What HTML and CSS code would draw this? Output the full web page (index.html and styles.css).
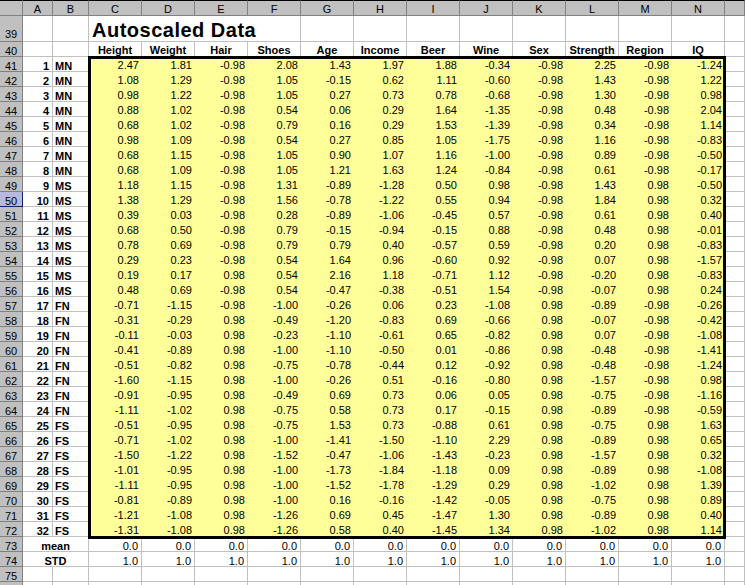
FILE: index.html
```html
<!DOCTYPE html>
<html>
<head>
<meta charset="utf-8">
<title>Autoscaled Data</title>
<link rel="stylesheet" href="styles.css">
</head>
<body>
<div class="sheet">
<div class="ch"></div><div class="ch">A</div><div class="ch">B</div><div class="ch">C</div><div class="ch">D</div><div class="ch">E</div><div class="ch">F</div><div class="ch">G</div><div class="ch">H</div><div class="ch">I</div><div class="ch">J</div><div class="ch">K</div><div class="ch">L</div><div class="ch">M</div><div class="ch">N</div><div class="ch"></div>

<div class="rh r39">39</div><div></div><div></div><div class="title">Autoscaled Data</div><div></div><div></div><div></div><div></div><div></div><div></div><div></div><div></div><div></div>

<div class="rh">40</div><div></div><div></div><div class="hd">Height</div><div class="hd">Weight</div><div class="hd">Hair</div><div class="hd">Shoes</div><div class="hd">Age</div><div class="hd">Income</div><div class="hd">Beer</div><div class="hd">Wine</div><div class="hd">Sex</div><div class="hd">Strength</div><div class="hd">Region</div><div class="hd">IQ</div><div></div>

<div class="rh">41</div><div class="n">1</div><div class="g">MN</div>
<div class="data">
<span>2.47</span><span>1.81</span><span>-0.98</span><span>2.08</span><span>1.43</span><span>1.97</span><span>1.88</span><span>-0.34</span><span>-0.98</span><span>2.25</span><span>-0.98</span><span>-1.24</span>
<span>1.08</span><span>1.29</span><span>-0.98</span><span>1.05</span><span>-0.15</span><span>0.62</span><span>1.11</span><span>-0.60</span><span>-0.98</span><span>1.43</span><span>-0.98</span><span>1.22</span>
<span>0.98</span><span>1.22</span><span>-0.98</span><span>1.05</span><span>0.27</span><span>0.73</span><span>0.78</span><span>-0.68</span><span>-0.98</span><span>1.30</span><span>-0.98</span><span>0.98</span>
<span>0.88</span><span>1.02</span><span>-0.98</span><span>0.54</span><span>0.06</span><span>0.29</span><span>1.64</span><span>-1.35</span><span>-0.98</span><span>0.48</span><span>-0.98</span><span>2.04</span>
<span>0.68</span><span>1.02</span><span>-0.98</span><span>0.79</span><span>0.16</span><span>0.29</span><span>1.53</span><span>-1.39</span><span>-0.98</span><span>0.34</span><span>-0.98</span><span>1.14</span>
<span>0.98</span><span>1.09</span><span>-0.98</span><span>0.54</span><span>0.27</span><span>0.85</span><span>1.05</span><span>-1.75</span><span>-0.98</span><span>1.16</span><span>-0.98</span><span>-0.83</span>
<span>0.68</span><span>1.15</span><span>-0.98</span><span>1.05</span><span>0.90</span><span>1.07</span><span>1.16</span><span>-1.00</span><span>-0.98</span><span>0.89</span><span>-0.98</span><span>-0.50</span>
<span>0.68</span><span>1.09</span><span>-0.98</span><span>1.05</span><span>1.21</span><span>1.63</span><span>1.24</span><span>-0.84</span><span>-0.98</span><span>0.61</span><span>-0.98</span><span>-0.17</span>
<span>1.18</span><span>1.15</span><span>-0.98</span><span>1.31</span><span>-0.89</span><span>-1.28</span><span>0.50</span><span>0.98</span><span>-0.98</span><span>1.43</span><span>0.98</span><span>-0.50</span>
<span>1.38</span><span>1.29</span><span>-0.98</span><span>1.56</span><span>-0.78</span><span>-1.22</span><span>0.55</span><span>0.94</span><span>-0.98</span><span>1.84</span><span>0.98</span><span>0.32</span>
<span>0.39</span><span>0.03</span><span>-0.98</span><span>0.28</span><span>-0.89</span><span>-1.06</span><span>-0.45</span><span>0.57</span><span>-0.98</span><span>0.61</span><span>0.98</span><span>0.40</span>
<span>0.68</span><span>0.50</span><span>-0.98</span><span>0.79</span><span>-0.15</span><span>-0.94</span><span>-0.15</span><span>0.88</span><span>-0.98</span><span>0.48</span><span>0.98</span><span>-0.01</span>
<span>0.78</span><span>0.69</span><span>-0.98</span><span>0.79</span><span>0.79</span><span>0.40</span><span>-0.57</span><span>0.59</span><span>-0.98</span><span>0.20</span><span>0.98</span><span>-0.83</span>
<span>0.29</span><span>0.23</span><span>-0.98</span><span>0.54</span><span>1.64</span><span>0.96</span><span>-0.60</span><span>0.92</span><span>-0.98</span><span>0.07</span><span>0.98</span><span>-1.57</span>
<span>0.19</span><span>0.17</span><span>0.98</span><span>0.54</span><span>2.16</span><span>1.18</span><span>-0.71</span><span>1.12</span><span>-0.98</span><span>-0.20</span><span>0.98</span><span>-0.83</span>
<span>0.48</span><span>0.69</span><span>-0.98</span><span>0.54</span><span>-0.47</span><span>-0.38</span><span>-0.51</span><span>1.54</span><span>-0.98</span><span>-0.07</span><span>0.98</span><span>0.24</span>
<span>-0.71</span><span>-1.15</span><span>-0.98</span><span>-1.00</span><span>-0.26</span><span>0.06</span><span>0.23</span><span>-1.08</span><span>0.98</span><span>-0.89</span><span>-0.98</span><span>-0.26</span>
<span>-0.31</span><span>-0.29</span><span>0.98</span><span>-0.49</span><span>-1.20</span><span>-0.83</span><span>0.69</span><span>-0.66</span><span>0.98</span><span>-0.07</span><span>-0.98</span><span>-0.42</span>
<span>-0.11</span><span>-0.03</span><span>0.98</span><span>-0.23</span><span>-1.10</span><span>-0.61</span><span>0.65</span><span>-0.82</span><span>0.98</span><span>0.07</span><span>-0.98</span><span>-1.08</span>
<span>-0.41</span><span>-0.89</span><span>0.98</span><span>-1.00</span><span>-1.10</span><span>-0.50</span><span>0.01</span><span>-0.86</span><span>0.98</span><span>-0.48</span><span>-0.98</span><span>-1.41</span>
<span>-0.51</span><span>-0.82</span><span>0.98</span><span>-0.75</span><span>-0.78</span><span>-0.44</span><span>0.12</span><span>-0.92</span><span>0.98</span><span>-0.48</span><span>-0.98</span><span>-1.24</span>
<span>-1.60</span><span>-1.15</span><span>0.98</span><span>-1.00</span><span>-0.26</span><span>0.51</span><span>-0.16</span><span>-0.80</span><span>0.98</span><span>-1.57</span><span>-0.98</span><span>0.98</span>
<span>-0.91</span><span>-0.95</span><span>0.98</span><span>-0.49</span><span>0.69</span><span>0.73</span><span>0.06</span><span>0.05</span><span>0.98</span><span>-0.75</span><span>-0.98</span><span>-1.16</span>
<span>-1.11</span><span>-1.02</span><span>0.98</span><span>-0.75</span><span>0.58</span><span>0.73</span><span>0.17</span><span>-0.15</span><span>0.98</span><span>-0.89</span><span>-0.98</span><span>-0.59</span>
<span>-0.51</span><span>-0.95</span><span>0.98</span><span>-0.75</span><span>1.53</span><span>0.73</span><span>-0.88</span><span>0.61</span><span>0.98</span><span>-0.75</span><span>0.98</span><span>1.63</span>
<span>-0.71</span><span>-1.02</span><span>0.98</span><span>-1.00</span><span>-1.41</span><span>-1.50</span><span>-1.10</span><span>2.29</span><span>0.98</span><span>-0.89</span><span>0.98</span><span>0.65</span>
<span>-1.50</span><span>-1.22</span><span>0.98</span><span>-1.52</span><span>-0.47</span><span>-1.06</span><span>-1.43</span><span>-0.23</span><span>0.98</span><span>-1.57</span><span>0.98</span><span>0.32</span>
<span>-1.01</span><span>-0.95</span><span>0.98</span><span>-1.00</span><span>-1.73</span><span>-1.84</span><span>-1.18</span><span>0.09</span><span>0.98</span><span>-0.89</span><span>0.98</span><span>-1.08</span>
<span>-1.11</span><span>-0.95</span><span>0.98</span><span>-1.00</span><span>-1.52</span><span>-1.78</span><span>-1.29</span><span>0.29</span><span>0.98</span><span>-1.02</span><span>0.98</span><span>1.39</span>
<span>-0.81</span><span>-0.89</span><span>0.98</span><span>-1.00</span><span>0.16</span><span>-0.16</span><span>-1.42</span><span>-0.05</span><span>0.98</span><span>-0.75</span><span>0.98</span><span>0.89</span>
<span>-1.21</span><span>-1.08</span><span>0.98</span><span>-1.26</span><span>0.69</span><span>0.45</span><span>-1.47</span><span>1.30</span><span>0.98</span><span>-0.89</span><span>0.98</span><span>0.40</span>
<span>-1.31</span><span>-1.08</span><span>0.98</span><span>-1.26</span><span>0.58</span><span>0.40</span><span>-1.45</span><span>1.34</span><span>0.98</span><span>-1.02</span><span>0.98</span><span>1.14</span>
</div>
<div></div>
<div class="rh">42</div><div class="n">2</div><div class="g">MN</div><div></div>
<div class="rh">43</div><div class="n">3</div><div class="g">MN</div><div></div>
<div class="rh">44</div><div class="n">4</div><div class="g">MN</div><div></div>
<div class="rh">45</div><div class="n">5</div><div class="g">MN</div><div></div>
<div class="rh">46</div><div class="n">6</div><div class="g">MN</div><div></div>
<div class="rh">47</div><div class="n">7</div><div class="g">MN</div><div></div>
<div class="rh">48</div><div class="n">8</div><div class="g">MN</div><div></div>
<div class="rh">49</div><div class="n">9</div><div class="g">MS</div><div></div>
<div class="rh sel">50</div><div class="n">10</div><div class="g">MS</div><div></div>
<div class="rh">51</div><div class="n">11</div><div class="g">MS</div><div></div>
<div class="rh">52</div><div class="n">12</div><div class="g">MS</div><div></div>
<div class="rh">53</div><div class="n">13</div><div class="g">MS</div><div></div>
<div class="rh">54</div><div class="n">14</div><div class="g">MS</div><div></div>
<div class="rh">55</div><div class="n">15</div><div class="g">MS</div><div></div>
<div class="rh">56</div><div class="n">16</div><div class="g">MS</div><div></div>
<div class="rh">57</div><div class="n">17</div><div class="g">FN</div><div></div>
<div class="rh">58</div><div class="n">18</div><div class="g">FN</div><div></div>
<div class="rh">59</div><div class="n">19</div><div class="g">FN</div><div></div>
<div class="rh">60</div><div class="n">20</div><div class="g">FN</div><div></div>
<div class="rh">61</div><div class="n">21</div><div class="g">FN</div><div></div>
<div class="rh">62</div><div class="n">22</div><div class="g">FN</div><div></div>
<div class="rh">63</div><div class="n">23</div><div class="g">FN</div><div></div>
<div class="rh">64</div><div class="n">24</div><div class="g">FN</div><div></div>
<div class="rh">65</div><div class="n">25</div><div class="g">FS</div><div></div>
<div class="rh">66</div><div class="n">26</div><div class="g">FS</div><div></div>
<div class="rh">67</div><div class="n">27</div><div class="g">FS</div><div></div>
<div class="rh">68</div><div class="n">28</div><div class="g">FS</div><div></div>
<div class="rh">69</div><div class="n">29</div><div class="g">FS</div><div></div>
<div class="rh">70</div><div class="n">30</div><div class="g">FS</div><div></div>
<div class="rh">71</div><div class="n">31</div><div class="g">FS</div><div></div>
<div class="rh">72</div><div class="n">32</div><div class="g">FS</div><div></div>

<div class="rh">73</div><div class="m">mean</div><div>0.0</div><div>0.0</div><div>0.0</div><div>0.0</div><div>0.0</div><div>0.0</div><div>0.0</div><div>0.0</div><div>0.0</div><div>0.0</div><div>0.0</div><div>0.0</div><div></div>
<div class="rh">74</div><div class="m">STD</div><div>1.0</div><div>1.0</div><div>1.0</div><div>1.0</div><div>1.0</div><div>1.0</div><div>1.0</div><div>1.0</div><div>1.0</div><div>1.0</div><div>1.0</div><div>1.0</div><div></div>
<div class="rh">75</div><div></div><div></div><div></div><div></div><div></div><div></div><div></div><div></div><div></div><div></div><div></div><div></div><div></div><div></div><div></div>
<div class="rh"></div><div></div><div></div><div></div><div></div><div></div><div></div><div></div><div></div><div></div><div></div><div></div><div></div><div></div><div></div><div></div>
</div>
</body>
</html>
```
FILE: styles.css
```css
html, body {
  margin: 0;
  padding: 0;
  background: #ffffff;
}

body {
  overflow: hidden;
}

.sheet {
  display: grid;
  grid-template-columns: 23px 30px 36px repeat(12, 53px) 20px;
  grid-template-rows: 16px 26px 15px;
  grid-auto-rows: 15px;
  width: 745px;
  height: 585px;
  overflow: hidden;
  font-family: "Liberation Sans", Arial, sans-serif;
  font-size: 11px;
  color: #000;
}

.sheet > div {
  box-sizing: border-box;
  border-right: 1px solid #c0c0c0;
  border-bottom: 1px solid #c0c0c0;
  display: flex;
  align-items: flex-end;
  justify-content: flex-end;
  padding: 0 3px 1px 0;
  line-height: 8px;
  white-space: nowrap;
}

.sheet > .ch {
  background: #c0c0c0;
  border-top: 1px solid #000;
  border-right-color: #808080;
  border-bottom-color: #808080;
  justify-content: center;
  padding: 0;
  line-height: 12px;
}

.sheet > .rh {
  background: #c0c0c0;
  border-right-color: #808080;
  border-bottom-color: #808080;
  justify-content: center;
  padding: 0 0 1px 0;
}

.sheet > .rh.r39 {
  padding-bottom: 3px;
}

.sheet > .rh.sel {
  background: #b8b8e0;
  border-right-color: #0a246a;
  border-bottom-color: #0a246a;
}

.sheet > .title {
  grid-column: span 4;
  justify-content: flex-start;
  padding: 0 0 4px 3px;
  font-size: 20px;
  font-weight: bold;
  letter-spacing: 0.5px;
  line-height: 14px;
}

.sheet > .hd {
  justify-content: center;
  font-weight: bold;
  padding: 0 0 2px 0;
}

.sheet > .n {
  font-weight: bold;
}

.sheet > .g {
  font-weight: bold;
  justify-content: flex-start;
  padding: 0 0 1px 2px;
}

.sheet > .m {
  grid-column: span 2;
  justify-content: center;
  font-weight: bold;
  padding: 0 0 1px 0;
}

.sheet > .data {
  grid-column: span 12;
  grid-row: span 32;
  display: grid;
  grid-template-columns: repeat(12, 53px);
  grid-auto-rows: 15px;
  align-content: start;
  align-items: stretch;
  margin-bottom: -1px;
  background: #ffff99;
  border: 0;
  padding: 0;
  outline: 3px solid #000;
  outline-offset: -2px;
  z-index: 1;
}

.data > span {
  display: flex;
  align-items: flex-end;
  justify-content: flex-end;
  padding: 0 3px 2px 0;
  line-height: 10px;
}
```
